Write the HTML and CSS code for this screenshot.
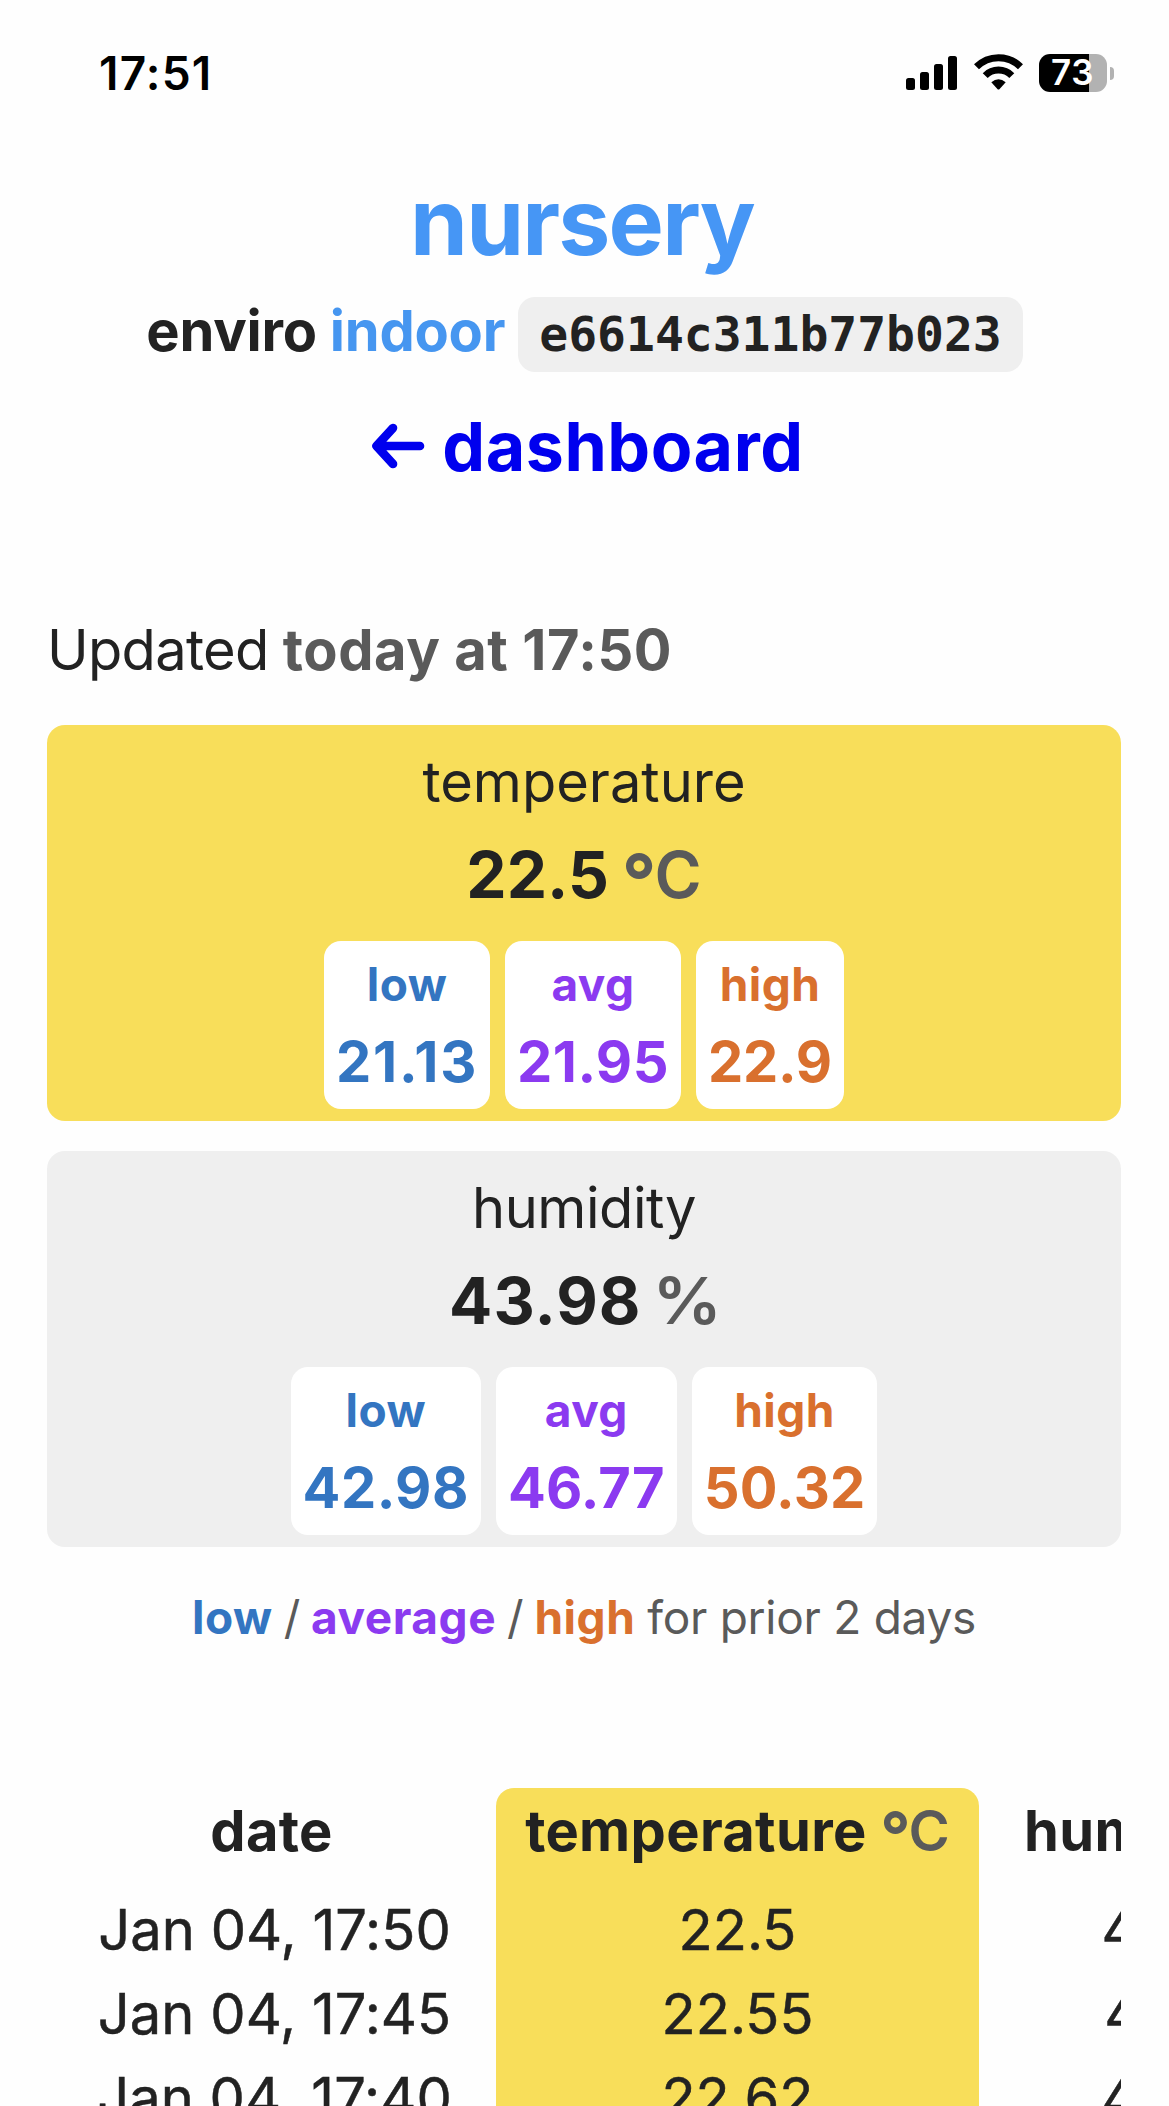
FILE: index.html
```html
<!DOCTYPE html>
<html lang="en">
<head>
<meta charset="utf-8">
<title>nursery – enviro indoor</title>
<link rel="stylesheet" href="styles.css">
</head>
<body>
<div class="status">
  <span class="clock">17:51</span>
  <div class="status-icons">
    <svg class="signal" width="51" height="34" viewBox="0 0 51 34"><rect y="22" width="9" height="12" rx="2.5"/><rect x="14" y="16" width="9" height="18" rx="2.5"/><rect x="28" y="8" width="9" height="26" rx="2.5"/><rect x="42" width="9" height="34" rx="2.5"/></svg>
    <svg class="wifi" width="49" height="36" viewBox="0 0 49 36"><g fill="none" stroke="#000" stroke-width="7"><path d="M2.5 12.8A31 31 0 0 1 46.5 12.8"/><path d="M11.2 21.6A18.8 18.8 0 0 1 37.8 21.6"/></g><path d="M17.3 28.3Q24.5 22.4 31.7 28.3L25.4 35.2Q24.5 36 23.6 35.2Z"/></svg>
    <div class="battery"><span class="battery-body">73</span><span class="battery-cap"></span></div>
  </div>
</div>

<header class="head">
  <h1>nursery</h1>
  <h2><span class="model">enviro</span><span class="kind">indoor</span><code>e6614c311b77b023</code></h2>
  <a class="back"><svg width="60" height="48" viewBox="0 0 60 48"><path d="M55 24H11.5M28 6L11.5 24L28 42" fill="none" stroke="#0000ee" stroke-width="8.6" stroke-linecap="round" stroke-linejoin="round"/></svg><span>dashboard</span></a>
</header>

<main>
  <p class="updated"><span>Updated</span><strong>today at 17:50</strong></p>

  <section class="card warm">
    <h3>temperature</h3>
    <p class="reading"><b class="tight">22.5</b><span class="deg"><i>°</i>C</span></p>
    <div class="stats">
      <div class="stat low"><span>low</span><b class="loose">21.13</b></div>
      <div class="stat avg"><span>avg</span><b>21.95</b></div>
      <div class="stat high"><span>high</span><b class="tight">22.9</b></div>
    </div>
  </section>

  <section class="card">
    <h3>humidity</h3>
    <p class="reading"><b>43.98</b><span class="pct">%</span></p>
    <div class="stats">
      <div class="stat low"><span>low</span><b>42.98</b></div>
      <div class="stat avg"><span>avg</span><b class="snug">46.77</b></div>
      <div class="stat high"><span>high</span><b class="snug">50.32</b></div>
    </div>
  </section>

  <p class="legend"><b class="low">low</b><span>/</span><b class="avg">average</b><span>/</span><b class="high">high</b><span class="range">for prior 2 days</span></p>

  <div class="scroller">
    <table>
      <colgroup><col class="c-date"><col class="c-temp"><col class="c-hum"></colgroup>
      <thead><tr><th>date</th><th class="hot">temperature <span class="deg"><i>°</i>C</span></th><th class="hum">humidity <span class="unit">%</span></th></tr></thead>
      <tbody>
        <tr><td>Jan 04, 17:50</td><td class="hot">22.5</td><td>43.98</td></tr>
        <tr><td>Jan 04, 17:45</td><td class="hot">22.55</td><td>43.77</td></tr>
        <tr><td>Jan 04, 17:40</td><td class="hot">22.62</td><td>44.03</td></tr>
      </tbody>
    </table>
  </div>
</main>
</body>
</html>
```
FILE: styles.css
```css
* { box-sizing: border-box; margin: 0; padding: 0; }
html { height: 2106px; overflow: hidden; }
body {
  height: 2106px;
  overflow: hidden;
  background: #fefefe;
  color: #222;
  font-family: Inter, "Liberation Sans", sans-serif;
  font-size: 56px;
}

/* status bar */
.status {
  display: flex;
  justify-content: space-between;
  align-items: center;
  height: 146px;
  padding: 0 55px 0 99px;
  color: #000;
}
.clock { font-size: 46px; font-weight: 600; letter-spacing: 0.026em; line-height: 60px; }
.status-icons { display: flex; align-items: center; }
.signal { margin-right: 17px; }
.wifi { margin-top: -2px; margin-right: 16px; }
.battery { display: flex; align-items: center; gap: 3px; }
.battery-body {
  width: 68px;
  height: 38px;
  padding-left: 12px;
  border-radius: 11px;
  background: linear-gradient(90deg, #000 50px, #b2b2b2 50px);
  color: #fff;
  font-size: 35px;
  font-weight: 600;
  letter-spacing: 0.02em;
  line-height: 37px;
}
.battery-cap { width: 4px; height: 13px; border-radius: 0 5px 5px 0; background: #b2b2b2; }

/* heading */
.head { display: flex; flex-direction: column; align-items: center; padding-top: 20px; }
h1 { padding-right: 5px; color: #4696f5; font-size: 93px; font-weight: 700; line-height: 110px; letter-spacing: -0.0195em; }
h2 { display: flex; align-items: baseline; gap: 13px; margin-top: 18px; font-size: 56px; line-height: 75px; letter-spacing: -0.004em; }
.kind { color: #4696f0; }
h2 code {
  padding: 0 21px;
  border-radius: 17px;
  background: #efefef;
  font: 700 48px/75px "DejaVu Sans Mono", monospace;
  letter-spacing: 0;
}
.back { display: flex; align-items: center; gap: 17px; margin-top: 34px; margin-bottom: 2px; color: #0000ee; font-size: 68px; font-weight: 700; line-height: 80px; letter-spacing: 0.008em; }
.back svg { display: block; }

main { padding: 122px 48px 0 47px; }
.updated { display: flex; gap: 14px; line-height: 80px; font-weight: 400; letter-spacing: -0.012em; }
.updated strong { color: #5a5a5a; font-weight: 700; letter-spacing: 0.0102em; }

/* sensor cards */
.card { height: 396px; margin-top: 30px; padding-top: 22px; border-radius: 18px; background: #efefef; text-align: center; }
.card.warm { margin-top: 35px; background: #f8de5a; }
h3 { font-size: 56px; font-weight: 400; line-height: 70px; letter-spacing: -0.008em; }
.warm h3 { letter-spacing: 0; }
.reading { display: flex; justify-content: center; gap: 13px; margin-top: 18px; font-size: 64px; line-height: 80px; }
.reading b { letter-spacing: 0.0173em; }
.reading span { color: #5a5a5a; }
.deg { color: #5a5a5a; font-weight: 600; letter-spacing: 0; }
.deg i { margin-right: -2px; font-style: normal; font-weight: 700; font-size: 1.18em; line-height: 0; vertical-align: -0.13em; }
.pct { font-weight: 600; transform: scaleX(1.08); }
.stats { display: flex; justify-content: center; gap: 15px; margin-top: 26px; }
.stat { display: flex; flex-direction: column; gap: 17px; height: 168px; padding: 15px 12px 0; border-radius: 17px; background: #fff; }
.stat span { font-size: 46px; font-weight: 700; line-height: 56px; letter-spacing: 0.01em; }
.stat b { font-size: 56px; line-height: 66px; letter-spacing: 0.0083em; }
.stat .loose { letter-spacing: 0.031em; }
.stat .snug { letter-spacing: 0.003em; }
.stat .tight { letter-spacing: -0.004em; }
.reading .tight { letter-spacing: 0; }
.low { color: #3375c1; }
.avg { color: #8b3af0; }
.high { color: #d9702e; }

.legend { display: flex; justify-content: center; gap: 11px; margin-top: 40px; color: #5a5a5a; font-size: 46px; font-weight: 400; line-height: 60px; letter-spacing: -0.006em; }
.legend b { font-weight: 700; letter-spacing: 0.0115em; }
.range { margin-left: 1px; }

/* history table, cut off at the right edge of the content column */
.scroller { margin-top: 141px; overflow: hidden; }
table { table-layout: fixed; width: 1332px; border-collapse: collapse; text-align: center; white-space: nowrap; }
.c-date { width: 449px; }
.c-temp { width: 483px; }
.c-hum { width: 400px; }
th { height: 100px; padding-bottom: 15px; line-height: 80px; letter-spacing: 0.006em; }
th.hot { border-radius: 18px 18px 0 0; }
th.hum { padding-left: 5px; }
td { height: 84px; line-height: 84px; font-weight: 400; letter-spacing: 0.001em; -webkit-text-stroke: 0.5px currentColor; }
td:first-child { padding-left: 6px; }
.hot { background: #f8de5a; }
.unit { color: #5a5a5a; font-weight: 600; }
```
